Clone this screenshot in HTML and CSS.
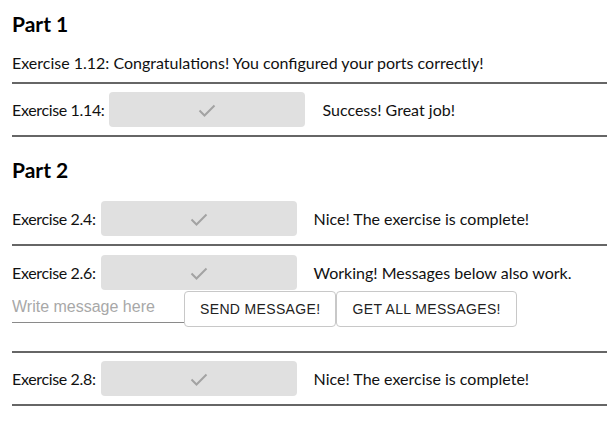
FILE: index.html
```html
<!DOCTYPE html>
<html>
<head>
<meta charset="utf-8">
<link rel="stylesheet" href="styles.css">
</head>
<body>
<div class="app">
  <section class="part">
    <h3 class="part-title">Part 1</h3>
    <div class="row row-text">Exercise 1.12: Congratulations! You configured your ports correctly!</div>
    <hr class="rule">
    <div class="row">
      <span class="label">Exercise 1.14:</span>
      <span class="status"><svg class="check" viewBox="0 0 24 24"><path d="M4.5 12.5l5 5 10-10" /></svg></span>
      <span class="msg">Success! Great job!</span>
    </div>
    <hr class="rule">
  </section>
  <section class="part part-2">
    <h3 class="part-title">Part 2</h3>
    <div class="row">
      <span class="label">Exercise 2.4:</span>
      <span class="status"><svg class="check" viewBox="0 0 24 24"><path d="M4.5 12.5l5 5 10-10" /></svg></span>
      <span class="msg">Nice! The exercise is complete!</span>
    </div>
    <hr class="rule">
    <div class="block">
      <div class="row row-tight">
        <span class="label">Exercise 2.6:</span>
        <span class="status"><svg class="check" viewBox="0 0 24 24"><path d="M4.5 12.5l5 5 10-10" /></svg></span>
        <span class="msg">Working! Messages below also work.</span>
      </div>
      <div class="messages">
        <input class="msg-input" type="text" placeholder="Write message here">
        <button class="btn">Send message!</button>
        <button class="btn">Get all messages!</button>
      </div>
    </div>
    <hr class="rule">
    <div class="row">
      <span class="label">Exercise 2.8:</span>
      <span class="status"><svg class="check" viewBox="0 0 24 24"><path d="M4.5 12.5l5 5 10-10" /></svg></span>
      <span class="msg">Nice! The exercise is complete!</span>
    </div>
    <hr class="rule">
  </section>
</div>
</body>
</html>
```
FILE: styles.css
```css
html, body {
  margin: 0;
  padding: 0;
  background: #ffffff;
}
body {
  font-family: "Lato", "Open Sans", sans-serif;
  font-size: 16px;
  color: #111111;
}
.app {
  padding: 12px 0 0 12px;
}
.part-title {
  margin: 0 0 8px 0;
  font-size: 21px;
  line-height: 24px;
  font-weight: 700;
  color: #000000;
}
.part-2 {
  margin-top: 21px;
}
.part-2 .part-title {
  margin-bottom: 11px;
}
.row {
  display: flex;
  align-items: center;
  padding: 8px 0;
  line-height: 22px;
}
.row-text {
  display: block;
}
.row-tight {
  padding-bottom: 0;
  padding-top: 9px;
}
.rule {
  margin: 0;
  border: 0;
  border-top: 2px solid #666666;
  height: 0;
}
.label {
  white-space: nowrap;
  letter-spacing: -0.35px;
}
.status {
  display: flex;
  align-items: center;
  justify-content: center;
  flex: none;
  width: 196px;
  height: 35px;
  margin: 0 17px 0 5px;
  background: #e0e0e0;
  border-radius: 4px;
}
.check {
  width: 24px;
  height: 24px;
  fill: none;
  stroke: #a3a3a3;
  stroke-width: 2;
}
.msg {
  white-space: nowrap;
}
.block {
  padding-bottom: 24px;
}
.messages {
  display: flex;
  align-items: flex-end;
  margin-top: 1px;
}
.msg-input {
  width: 172px;
  height: 30px;
  box-sizing: border-box;
  margin: 0 0 4px 0;
  padding: 0 0 2px 0;
  border: 0;
  border-bottom: 1px solid #8a8a8a;
  font-family: "Liberation Sans", Arial, sans-serif;
  font-size: 16px;
  color: #222222;
  outline: none;
  background: transparent;
}
.msg-input::placeholder {
  color: #a8a8a8;
}
.btn {
  height: 36px;
  box-sizing: border-box;
  padding: 0 15px;
  border: 1px solid #c8c8c8;
  border-radius: 4px;
  background: #ffffff;
  font-family: "Liberation Sans", Arial, sans-serif;
  font-size: 14px;
  letter-spacing: 0.35px;
  text-transform: uppercase;
  color: #222222;
}
```
